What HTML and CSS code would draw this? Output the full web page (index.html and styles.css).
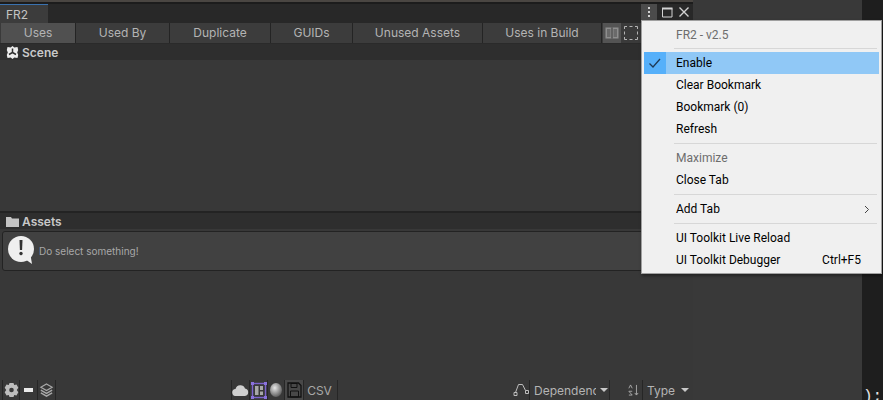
FILE: index.html
```html
<!DOCTYPE html>
<html lang="en">
<head>
    <meta charset="UTF-8">
    <title>FR2</title>
    <link rel="stylesheet" href="styles.css">
</head>
<body>

<div class="screen">
    <div class="window">
        <div class="topline"></div>
        <div class="tabstrip">
            <div class="tab">FR2</div>
            <div class="winbtns">
                <span class="kebab"><i></i><i></i><i></i></span>
                <svg width="14" height="14" viewBox="0 0 14 14"><path d="M2.500 3.500h9.500v8.500H2.500z" fill="none" stroke="#d2d2d2"/><path d="M2 2.500h10.500v2H2z" fill="#d2d2d2"/></svg>
                <svg width="14" height="14" viewBox="0 0 14 14"><path d="M2.500 2.500l9 9M11.500 2.500l-9 9" stroke="#d2d2d2" stroke-width="1.400"/></svg>
            </div>
        </div>
        <div class="panel">
            <div class="toolbar">
                <div class="tool active w75">Uses</div>
                <div class="tool w94">Used By</div>
                <div class="tool w101">Duplicate</div>
                <div class="tool w82">GUIDs</div>
                <div class="tool w130">Unused Assets</div>
                <div class="tool w119">Uses in Build</div>
                <div class="tool-icon on">
                    <svg width="14" height="14" viewBox="0 0 14 14"><rect x=".5" y="1.500" width="13" height="11" fill="#8e8e8e"/><path d="M7 1.500v11" stroke="#444" stroke-width="1.200"/><path d="M2 3h3.500v8H2zM8.500 3H12v8H8.500z" fill="#6a6a6a"/></svg>
                </div>
                <div class="tool-icon">
                    <svg width="16" height="16" viewBox="0 0 16 16"><path d="M4 1.500H1.500V4M6.500 1.500h3M12 1.500h2.500V4M14.500 6.500v3M14.500 12v2.500H12M9.500 14.500h-3M4 14.500H1.500V12M1.500 9.500v-3" fill="none" stroke="#b4b4b4"/></svg>
                </div>
            </div>
            <div class="section">
                <svg width="13" height="13" viewBox="0 0 13 13"><path d="M6.500 0l1.800 1.500 3.200-.5.700 3-1 2.500 1 2.500-.7 3-3.200-.5L6.500 13l-1.800-1.500-3.200.5-.7-3 1-2.500-1-2.500.7-3 3.200.5z" fill="#ececec"/><path d="M6.500 2.500v4l-3.500 2M6.500 6.500l3.500 2" stroke="#2e2e2e" stroke-width="1.500" fill="none"/></svg>
                <span>Scene</span>
            </div>
            <div class="scene-body"></div>
            <div class="splitter"></div>
            <div class="section">
                <svg width="13" height="11" viewBox="0 0 13 11"><path d="M0 1h5l1 1.500h7V11H0z" fill="#c4c4c4"/></svg>
                <span>Assets</span>
            </div>
            <div class="helpbox">
                <svg width="28" height="30" viewBox="0 0 28 30"><circle cx="14" cy="13" r="13" fill="#efefef"/><path d="M18 23l7 5-1.500-9z" fill="#efefef"/><path d="M12.500 4h3l-.4 10h-2.200z" fill="#333"/><circle cx="14" cy="17.500" r="1.700" fill="#333"/></svg>
                <span>Do select something!</span>
            </div>
            <div class="assets-body"></div>
            <div class="bottombar">
                <div class="bb-btn w-gear">
                    <svg width="15" height="16" viewBox="0 0 15 16"><path d="M5.500 1h4l.7 2 2.300-.4 1.800 3.200-1.500 2.200 1.500 2.200-1.800 3.200-2.300-.4-.7 2h-4l-.7-2-2.300.4L.7 10.200 2.200 8 .7 5.800l1.800-3.200 2.300.4z" fill="#bdbdbd"/><circle cx="7.500" cy="8" r="2.300" fill="#3a3a3a"/></svg>
                </div>
                <div class="bb-btn w18"><span class="dash"></span></div>
                <div class="bb-btn w18">
                    <svg width="15" height="15" viewBox="0 0 16 16"><path d="M8 1l6 3.500-6 3.500-6-3.500z" fill="none" stroke="#a8a8a8" stroke-width="1.300"/><path d="M2 7.500l6 3.500 6-3.500M2 10.500l6 3.500 6-3.500" fill="none" stroke="#a8a8a8" stroke-width="1.500"/></svg>
                </div>
                <div class="bb-gap"></div>
                <div class="bb-btn w18">
                    <svg width="17" height="12" viewBox="0 0 17 12"><path d="M4 12a3.500 3.500 0 0 1-.5-7A5 5 0 0 1 13 4.500a3.800 3.800 0 0 1 0 7.500z" fill="#cfcfcf"/></svg>
                </div>
                <div class="bb-btn w18 picked">
                    <svg width="16" height="17" viewBox="0 0 16 17"><rect x="1.500" y="1.500" width="13" height="14" fill="none" stroke="#7b62cc" stroke-width="1.400"/><path d="M0 0h3v3H0zM13 0h3v3h-3zM0 14h3v3H0zM13 14h3v3h-3z" fill="#8a72dc"/><path d="M4 4h3.500v9H4zM9 4h3v4H9zM9 9.500h3V13H9z" fill="#a8a8a8"/></svg>
                </div>
                <div class="bb-btn w17">
                    <svg width="14" height="16" viewBox="0 0 14 16"><defs><radialGradient id="ball" cx=".4" cy=".35" r=".7"><stop offset="0" stop-color="#e8e8e8"/><stop offset="1" stop-color="#555"/></radialGradient></defs><ellipse cx="7" cy="8" rx="6" ry="7" fill="url(#ball)"/></svg>
                </div>
                <div class="bb-btn w19 saved">
                    <svg width="15" height="16" viewBox="0 0 15 16"><path d="M1 1h10.500L14 3.500V15H1z" fill="none" stroke="#111" stroke-width="1.300"/><path d="M4 1.500h6v4H4zM3.500 9h8v6h-8z" fill="none" stroke="#111"/></svg>
                </div>
                <div class="bb-btn csv">CSV</div>
                <div class="bb-fill"></div>
                <div class="bb-ico">
                    <svg width="16" height="14" viewBox="0 0 16 14"><path d="M2.500 9.500L5.500 1.500h4l3 6" fill="none" stroke="#bdbdbd"/><path d="M1 9.500h3v3H1zM12.500 7.500h3v3h-3z" fill="none" stroke="#bdbdbd"/></svg>
                </div>
                <div class="bb-btn dep"><span class="dep-text">Dependency</span><b class="caret"></b></div>
                <div class="bb-ico sort">
                    <svg width="11" height="14" viewBox="0 0 13 14"><path d="M1 5l2-4 2 4M1 13h4L1 8.500h4M10 1v11.500M8 10.500l2 2.500 2-2.500" fill="none" stroke="#b4b4b4"/></svg>
                </div>
                <div class="bb-btn type">Type<b class="caret"></b></div>
            </div>
        </div>
    </div>
    <div class="sidepane"></div>
    <div class="code"><span>);</span></div>
</div>

<div class="menu">
    <div class="item title"><span>FR2 - v2.5</span></div>
    <div class="sep first"></div>
    <div class="item hover">
        <span class="check"><svg width="16" height="12" viewBox="0 0 16 12"><path d="M2.500 6.500l3.500 3.500 7-8" fill="none" stroke="#1f3a56" stroke-width="1.300"/></svg></span>
        <span>Enable</span>
    </div>
    <div class="item"><span>Clear Bookmark</span></div>
    <div class="item"><span>Bookmark (0)</span></div>
    <div class="item"><span>Refresh</span></div>
    <div class="sep"></div>
    <div class="item off"><span>Maximize</span></div>
    <div class="item"><span>Close Tab</span></div>
    <div class="sep"></div>
    <div class="item"><span>Add Tab</span><svg class="arrow" width="6" height="9" viewBox="0 0 6 9"><path d="M1 1l3.500 3.500L1 8" fill="none" stroke="#444"/></svg></div>
    <div class="sep"></div>
    <div class="item"><span>UI Toolkit Live Reload</span></div>
    <div class="item"><span>UI Toolkit Debugger</span><span class="key">Ctrl+F5</span></div>
</div>

</body>
</html>
```

FILE: styles.css
```css
* {
    box-sizing: border-box;
}
body {
    margin: 0;
    width: 883px;
    height: 400px;
    overflow: hidden;
    background-color: #393939;
    font-family: Inter, "Liberation Sans", sans-serif;
    font-size: 12px;
    color: #b4b4b4;
}
.screen {
    display: flex;
    height: 400px;
}
.window {
    width: 693px;
    display: flex;
    flex-direction: column;
    flex: none;
}
.topline {
    height: 4px;
    background-color: #1c1c1c;
    border-top: 2px solid #4a4642;
}
.tabstrip {
    height: 19px;
    background-color: #282828;
    display: flex;
    justify-content: space-between;
}
.tab {
    width: 48px;
    background-color: #3c3c3c;
    border-top: 1px solid #3a72b0;
    padding: 2px 0 0 6px;
    color: #c4c4c4;
}
.winbtns {
    width: 52px;
    display: flex;
    align-items: flex-start;
    gap: 3px;
}
.winbtns svg {
    margin-top: 1px;
}
.kebab {
    width: 16px;
    height: 16px;
    background-color: #4b4b4b;
    display: flex;
    flex-direction: column;
    align-items: center;
    justify-content: center;
    gap: 2px;
}
.kebab i {
    width: 2px;
    height: 2px;
    background-color: #d2d2d2;
}
.panel {
    flex: 1;
    background-color: #383838;
    display: flex;
    flex-direction: column;
}
.toolbar {
    height: 21px;
    display: flex;
    background-color: #3a3a3a;
    border-bottom: 1px solid #2a2a2a;
    padding-left: 1px;
}
.tool {
    text-align: center;
    line-height: 20px;
    background-color: #3c3c3c;
    border-right: 1px solid #242424;
}
.tool.active {
    background-color: #505050;
}
.w75 { width: 75px; }
.w94 { width: 94px; }
.w101 { width: 101px; }
.w82 { width: 82px; }
.w130 { width: 130px; }
.w119 { width: 119px; }
.tool-icon {
    width: 18px;
    display: flex;
    align-items: center;
    justify-content: center;
    margin-left: 1px;
}
.tool-icon.on {
    background-color: #545454;
}
.section {
    height: 16px;
    background-color: #2e2e2e;
    display: flex;
    align-items: center;
    gap: 3px;
    padding-left: 6px;
    font-weight: 600;
    color: #c8c8c8;
}
.scene-body {
    height: 151px;
}
.splitter {
    height: 2px;
    background-color: #232323;
}
.helpbox {
    margin: 2px 2px 0;
    height: 40px;
    background-color: #414141;
    border: 1px solid #232323;
    border-radius: 3px;
    display: flex;
    align-items: center;
    gap: 4px;
    padding-left: 4px;
    font-size: 10px;
    color: #a8a8a8;
}
.assets-body {
    flex: 1;
}
.bottombar {
    height: 20px;
    display: flex;
    align-items: center;
}
.bb-btn {
    height: 20px;
    display: flex;
    align-items: center;
    justify-content: center;
    border-right: 1px solid #262626;
}
.w-gear { width: 18px; margin-left: 2px; border-left: 1px solid #262626; }
.w17 { width: 17px; }
.w18 { width: 18px; }
.w19 { width: 19px; }
.dash {
    width: 9px;
    height: 4px;
    background-color: #eaeaea;
}
.bb-gap {
    width: 176px;
    height: 20px;
    border-right: 1px solid #262626;
}
.saved {
    background-color: #484848;
}
.csv {
    width: 34px;
    padding-right: 2px;
    color: #a8a8a8;
}
.bb-fill {
    flex: 1;
}
.bb-ico {
    width: 16px;
    display: flex;
    justify-content: center;
}
.dep {
    width: 81px;
    justify-content: flex-start;
    padding-left: 4px;
    border-left: 1px solid #262626;
    margin-right: 15px;
    gap: 4px;
}
.dep-text {
    width: 62px;
    overflow: hidden;
    white-space: nowrap;
}
.sort {
    width: 17px;
}
.type {
    width: 51px;
    justify-content: flex-start;
    padding-left: 4px;
    border-left: 1px solid #262626;
    border-right: 0;
    gap: 6px;
}
.caret {
    width: 0;
    height: 0;
    border-left: 4px solid transparent;
    border-right: 4px solid transparent;
    border-top: 4px solid #c8c8c8;
}
.sidepane {
    width: 169px;
    flex: none;
}
.code {
    flex: 1;
    background-color: #1e1e1e;
    color: #e4e4e4;
    display: flex;
    align-items: flex-end;
    font-family: "Liberation Mono", monospace;
    font-size: 16px;
    padding-left: 1px;
}
.code span {
    margin-bottom: -6px;
}
.menu {
    position: absolute;
    left: 641px;
    top: 20px;
    width: 241px;
    height: 254px;
    background-color: #f0f0f0;
    border: 1px solid #a0a0a0;
    box-shadow: 1px 2px 3px rgba(0, 0, 0, 0.4);
    padding: 2px;
    font-family: Roboto, "Liberation Sans", sans-serif;
    color: #000;
}
.item {
    height: 22px;
    padding-left: 32px;
    padding-right: 12px;
    display: flex;
    align-items: center;
    justify-content: space-between;
    position: relative;
}
.item.title, .item.off {
    color: #6d6d6d;
}
.item.title {
    height: 24px;
}
.item.hover {
    background-color: #90c8f6;
}
.check {
    position: absolute;
    left: 0;
    top: 0;
    width: 22px;
    height: 22px;
    background-color: #56b0fa;
    display: flex;
    align-items: center;
    justify-content: center;
}
.sep {
    height: 1px;
    margin: 3px 2px 3px 30px;
    background-color: #d7d7d7;
}
.sep.first {
    margin-top: 1px;
}
.key {
    margin-right: 6px;
}
.arrow {
    margin-right: -3px;
}
```
